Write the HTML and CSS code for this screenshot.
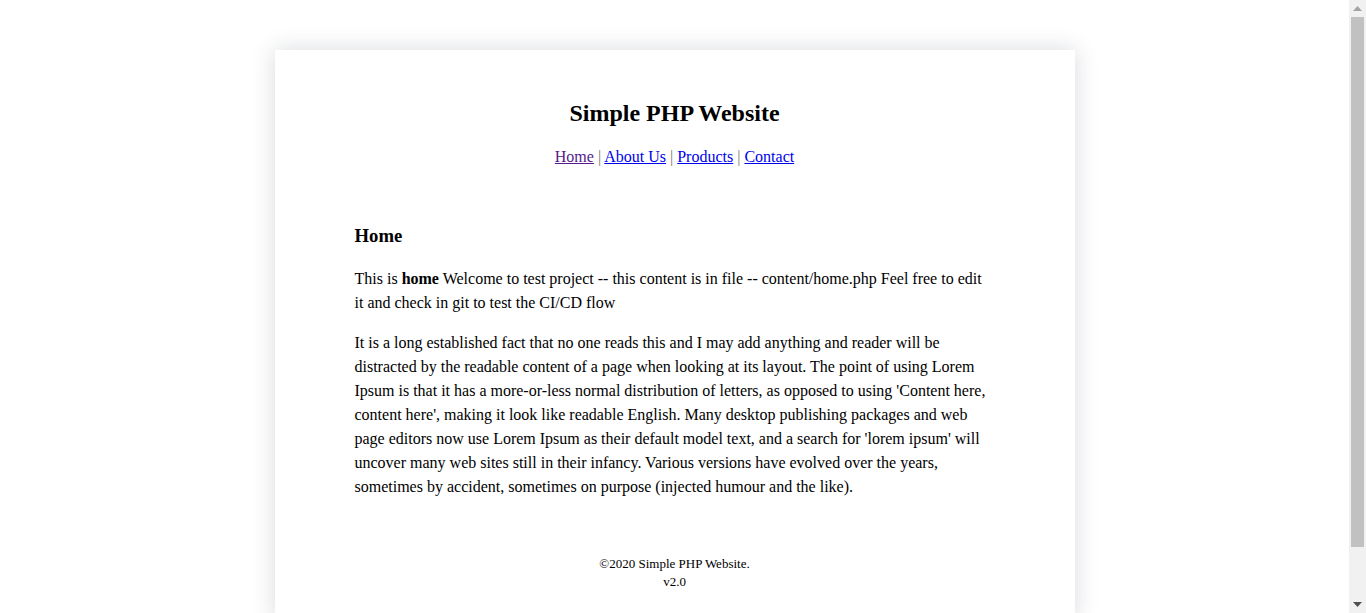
FILE: index.html
```html
<!DOCTYPE html>
<html>
<head>
<meta charset="utf-8">
<title>Simple PHP Website</title>
<link rel="stylesheet" href="styles.css">
</head>
<body>
<div class="wrap">
  <header class="header">
    <h1 class="title">Simple PHP Website</h1>
    <nav class="nav"><a class="visited" href="#">Home</a> <span class="sep">|</span> <a href="#">About Us</a> <span class="sep">|</span> <a href="#">Products</a> <span class="sep">|</span> <a href="#">Contact</a></nav>
  </header>
  <main class="content">
    <h2 class="page-title">Home</h2>
    <p>This is <strong>home</strong> Welcome to test project -- this content is in file -- content/home.php Feel free to edit it and check in git to test the CI/CD flow</p>
    <p>It is a long established fact that no one reads this and I may add anything and reader will be distracted by the readable content of a page when looking at its layout. The point of using Lorem Ipsum is that it has a more-or-less normal distribution of letters, as opposed to using 'Content here, content here', making it look like readable English. Many desktop publishing packages and web page editors now use Lorem Ipsum as their default model text, and a search for 'lorem ipsum' will uncover many web sites still in their infancy. Various versions have evolved over the years, sometimes by accident, sometimes on purpose (injected humour and the like).</p>
  </main>
  <footer class="footer">©2020 Simple PHP Website.<br>v2.0</footer>
</div>
<div class="scrollbar" aria-hidden="true">
  <div class="sb-btn sb-up"><svg width="9" height="5" viewBox="0 0 9 5"><polygon points="4.5,0 9,5 0,5" fill="#a3a3a3"/></svg></div>
  <div class="sb-track"><div class="sb-thumb"></div></div>
  <div class="sb-btn sb-down"><svg width="9" height="5" viewBox="0 0 9 5"><polygon points="0,0 9,0 4.5,5" fill="#505050"/></svg></div>
</div>
</body>
</html>
```

FILE: styles.css
```css
html, body {
  margin: 0;
  padding: 0;
  background: #ffffff;
}
html {
  scrollbar-width: none;
}
::-webkit-scrollbar {
  width: 0;
  height: 0;
}
body {
  font-family: "Liberation Serif", "Times New Roman", serif;
  color: #000;
  padding-right: 17px;
}
.wrap {
  width: 800px;
  margin: 50px auto 50px;
  background: #fff;
  box-shadow: 0 0 22px rgba(40, 50, 70, 0.18);
  padding: 0 0 29px;
  box-sizing: border-box;
}
.header {
  text-align: center;
  padding-top: 49px;
}
.title {
  font-size: 24px;
  font-weight: bold;
  line-height: 28px;
  margin: 0;
}
.nav {
  margin-top: 21px;
  font-size: 16px;
  line-height: 18px;
}
.nav a {
  color: #0000ee;
}
.nav a.visited {
  color: #551a8b;
}
.sep {
  color: #777;
}
.content {
  padding: 0 80px;
  margin-top: 59px;
}
.page-title {
  font-size: 18.72px;
  font-weight: bold;
  line-height: 22px;
  margin: 0 0 20px;
}
.content p {
  font-size: 16px;
  line-height: 24px;
  margin: 0 0 16px;
}
.footer {
  text-align: center;
  font-size: 13px;
  line-height: 18px;
  margin-top: 56px;
}

/* decorative classic scrollbar */
.scrollbar {
  position: fixed;
  top: 0;
  right: 0;
  width: 17px;
  height: 100vh;
  background: #f1f1f1;
  display: flex;
  flex-direction: column;
}
.sb-btn {
  height: 17px;
  flex: 0 0 17px;
  display: flex;
  align-items: center;
  justify-content: center;
}
.sb-btn svg {
  display: block;
}
.sb-track {
  flex: 1;
  padding: 0 2px;
}
.sb-thumb {
  height: 530px;
  background: #c1c1c1;
}
```
